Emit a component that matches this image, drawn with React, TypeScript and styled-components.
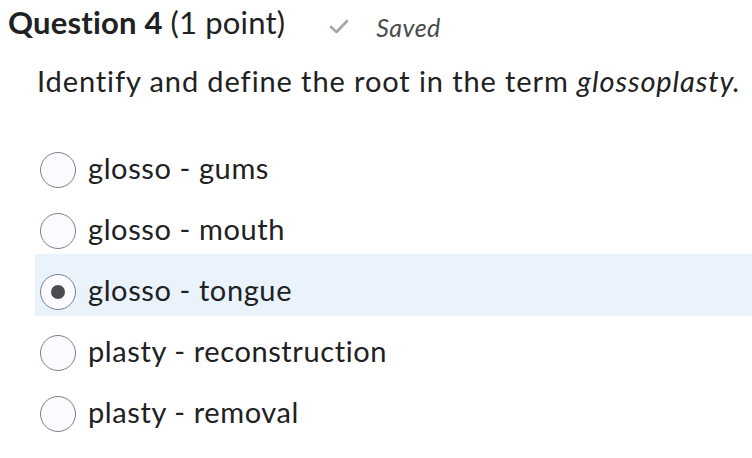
import React, {FC} from "react";
import styled, {createGlobalStyle} from "styled-components";

const GlobalStyle = createGlobalStyle`
	html, body {
		margin: 0;
		padding: 0;
		background: #ffffff;
	}
	body {
		font-family: Lato, "Open Sans", sans-serif;
		color: #202122;
	}
`;

const Page = styled.div`
	width: 752px;
	height: 458px;
	overflow: hidden;
`;

const Header = styled.div`
	display: flex;
	align-items: baseline;
	padding: 0 0 0 8px;
	height: 44px;
	line-height: 44px;
`;

const Title = styled.h1`
	margin: 0;
	font-size: 31px;
	font-weight: 700;
	letter-spacing: 0.2px;
`;

const Points = styled.span`
	font-weight: 400;
`;

const SavedStatus = styled.span`
	display: inline-flex;
	align-items: center;
	gap: 27px;
	margin-left: 44px;
	font-size: 25px;
	font-style: italic;
	letter-spacing: 0.4px;
	color: #494c4e;
`;

const Prompt = styled.p`
	margin: 19px 0 0 37px;
	font-size: 29px;
	line-height: 36px;
	letter-spacing: 0.9px;
	white-space: nowrap;
`;

const Options = styled.div`
	display: flex;
	flex-direction: column;
	margin-top: 33px;
	padding-left: 35px;
`;

const OptionRow = styled.label<{$selected?: boolean}>`
	display: flex;
	align-items: center;
	gap: 12px;
	height: 62px;
	margin-bottom: -1px;
	padding: 13px 0 0 5px;
	box-sizing: border-box;
	background: ${p => (p.$selected ? "#eaf2fb" : "transparent")};
	font-size: 29px;
	letter-spacing: 0.6px;
`;

const OptionText = styled.span`
	padding-bottom: 5px;
`;

const Radio = styled.span<{$checked?: boolean}>`
	flex: none;
	width: 36px;
	height: 36px;
	box-sizing: border-box;
	border-radius: 50%;
	border: 1.5px solid #7c8083;
	background: #f9fbff;
	display: flex;
	align-items: center;
	justify-content: center;

	&::after {
		content: "";
		display: ${p => (p.$checked ? "block" : "none")};
		width: 14px;
		height: 14px;
		border-radius: 50%;
		background: #494c4e;
	}
`;

const CheckIcon: FC = () => (
	<svg width="20" height="15" viewBox="0 0 20 15" fill="none">
		<path d="M2 8 L7.5 13 L18 2" stroke="#a4a8ab" strokeWidth="2.6" strokeLinecap="round" strokeLinejoin="round" />
	</svg>
);

const answers = [
	"glosso - gums",
	"glosso - mouth",
	"glosso - tongue",
	"plasty - reconstruction",
	"plasty - removal",
];

export default function App() {
	const selected = 2;

	return (
		<Page>
			<GlobalStyle />
			<Header>
				<Title>
					Question 4 <Points>(1 point)</Points>
				</Title>
				<SavedStatus>
					<CheckIcon />
					Saved
				</SavedStatus>
			</Header>
			<Prompt>
				Identify and define the root in the term <em>glossoplasty.</em>
			</Prompt>
			<Options>
				{answers.map((answer, i) => (
					<OptionRow key={answer} $selected={i === selected}>
						<Radio $checked={i === selected} />
						<OptionText>{answer}</OptionText>
					</OptionRow>
				))}
			</Options>
		</Page>
	);
}
